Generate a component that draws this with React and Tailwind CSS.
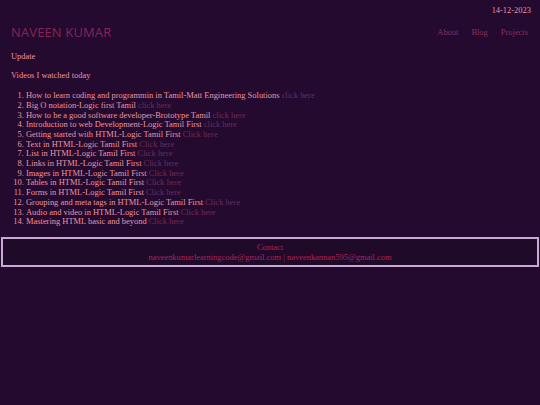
import React from "react";

const videos = [
  ["How to learn coding and programmin in Tamil-Matt Engineering Solutions", "click here"],
  ["Big O notation-Logic first Tamil", "click here"],
  ["How to be a good software developer-Brototype Tamil", "click here"],
  ["Introduction to web Development-Logic Tamil First", "click here"],
  ["Getting started with HTML-Logic Tamil First", "Click here"],
  ["Text in HTML-Logic Tamil First", "Click here"],
  ["List in HTML-Logic Tamil First", "Click here"],
  ["Links in HTML-Logic Tamil First", "Click here"],
  ["Images in HTML-Logic Tamil First", "Click here"],
  ["Tables in HTML-Logic Tamil First", "Click here"],
  ["Forms in HTML-Logic Tamil First", "Click here"],
  ["Grouping and meta tags in HTML-Logic Tamil First", "Click here"],
  ["Audio and video in HTML-Logic Tamil First", "Click here"],
  ["Mastering HTML basic and beyond", "Click here"],
];

export default function App() {
  return (
    <div
      className="w-[540px] h-[405px] bg-[#230a2e] text-[#ec94a2] text-[8.45px] leading-[9.7px] overflow-hidden"
      style={{ fontFamily: '"Liberation Serif", serif' }}
    >
      {/* top date */}
      <div className="flex justify-end pr-[9px] pt-[6px]">
        <span>14-12-2023</span>
      </div>

      {/* header */}
      <div className="flex items-center justify-between pl-[11px] pr-[12px] mt-[8px]">
        <h1
          className="text-[12.9px] leading-[16px] text-[#8a2458] tracking-[0.2px]"
          style={{ fontFamily: '"Open Sans", sans-serif' }}
        >
          NAVEEN KUMAR
        </h1>
        <nav className="flex gap-[13px] text-[#8a2e62] mt-[2px]">
          <a>About</a>
          <a>Blog</a>
          <a>Projects</a>
        </nav>
      </div>

      <p className="pl-[11px] mt-[12px]">Update</p>
      <p className="pl-[11px] mt-[10px]">Videos I watched today</p>

      <ol className="list-decimal pl-[26px] mt-[10px]">
        {videos.map(([title, link], i) => (
          <li key={i}>
            {title} <a className="text-[#6c2c60]">{link}</a>
          </li>
        ))}
      </ol>

      {/* footer */}
      <footer className="mt-[10px] mx-[1px] border-2 border-[#c8aad2] bg-[#200a2a] text-center text-[#a8245a] pt-[4px] pb-[3px]">
        <div>Contact</div>
        <div>naveenkumarlearningcode@gmail.com | naveenkannan595@gmail.com</div>
      </footer>
    </div>
  );
}
